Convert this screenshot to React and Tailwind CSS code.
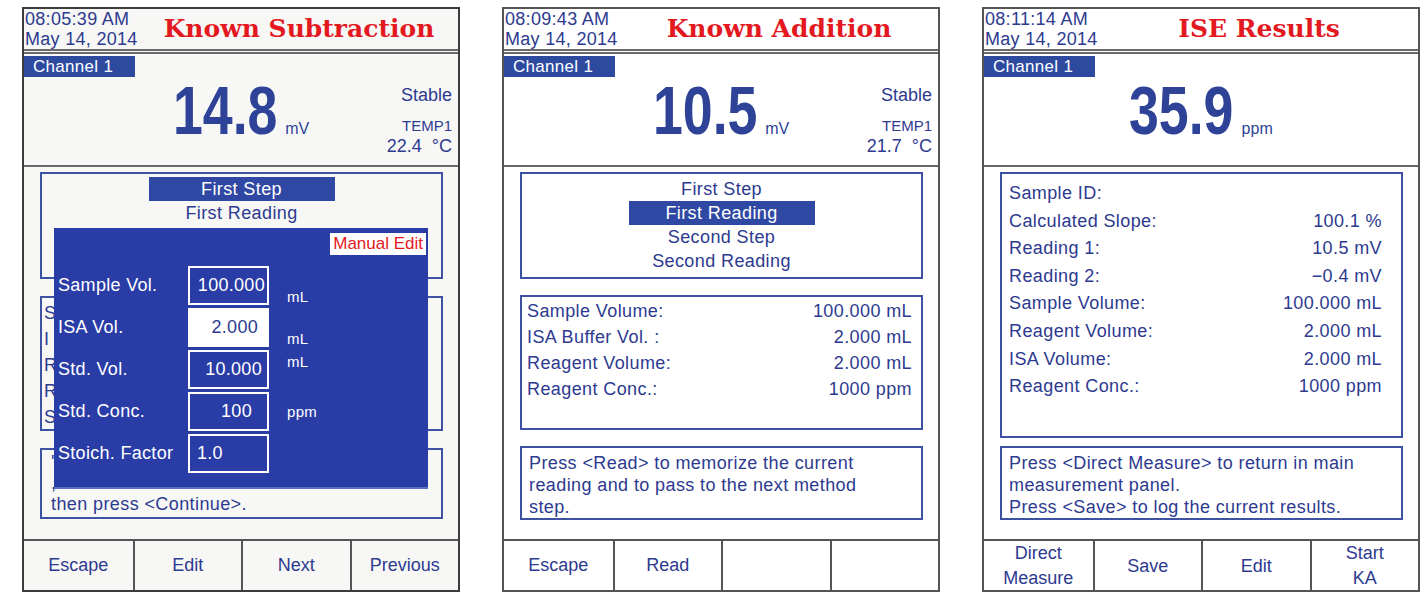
import React from "react";

const LCD = { fontFamily: '"Liberation Sans", Arial, sans-serif' };

function Panel({ time, date, title, value, unit, temp, buttons, children, overlay, dim }) {
  return (
    <div
      className={`relative w-[438px] h-[585px] border-2 flex flex-col text-[#2d3a8f] ${
        dim ? "border-[#3c3c3c] bg-[#f7f8f6]" : "border-[#555] bg-white"
      }`}
      style={LCD}
    >
      {/* header */}
      <div className="h-[40px] flex items-center">
        <div className="pl-[1px] text-[18px] leading-[20px] tracking-[0.3px] w-[118px] shrink-0 whitespace-nowrap">
          <div>{time}</div>
          <div>{date}</div>
        </div>
        <div
          className="flex-1 text-center text-[25px] font-bold text-[#e3191f] pr-[2px] whitespace-nowrap"
          style={{ fontFamily: '"DejaVu Serif", "Liberation Serif", serif' }}
        >
          {title}
        </div>
      </div>
      <div className="h-[5px] border-y-2 border-[#6a6a6a]" />

      {/* measurement */}
      <div className="h-[113px] border-b-2 border-[#6a6a6a] grid grid-cols-[1fr_auto_1fr]">
        <div>
          <div className="mt-[2px] w-[111px] h-[21px] bg-[#2d4a9f] text-white text-[17px] leading-[21px] pl-[9px] tracking-[0.3px]">
            Channel 1
          </div>
        </div>
        <div className="flex items-baseline pt-[23px]">
          <span className="inline-block scale-x-[0.79] -mx-[14px] text-[68px] leading-[67px] font-bold text-[#2e4398]">
            {value}
          </span>
          <span className="ml-[8px] text-[16px] text-[#2e4398]">{unit}</span>
        </div>
        <div className="text-right pr-[6px]">
          {temp && (
            <>
              <div className="mt-[31px] text-[18px] leading-[20px]">Stable</div>
              <div className="mt-[13px] text-[15px] leading-[16px]">TEMP1</div>
              <div className="mt-[2px] text-[18px] leading-[20px] whitespace-pre">{temp}</div>
            </>
          )}
        </div>
      </div>

      {/* content */}
      <div className="flex-1 pl-[16px] pr-[15px] flex flex-col text-[18px] tracking-[0.4px]">{children}</div>

      {/* buttons */}
      <div className="h-[51px] border-t-2 border-[#555] grid grid-cols-4 text-[18px]">
        {buttons.map((b, i) => (
          <div
            key={i}
            className={`flex flex-col items-center justify-center leading-[25px] ${
              i > 0 ? "border-l-2 border-[#555]" : ""
            }`}
          >
            {b.split("\n").map((l, j) => (
              <div key={j}>{l}</div>
            ))}
          </div>
        ))}
      </div>

      {overlay}
    </div>
  );
}

function Box({ className = "", children }) {
  return <div className={`border-2 border-[#3d52a3] ${className}`}>{children}</div>;
}

function Steps({ items, active }) {
  return (
    <Box className="mt-[5px] h-[107px] pt-[3px] flex flex-col items-center">
      {items.map((s, i) => (
        <div
          key={s}
          className={`h-[24px] leading-[24px] text-center ${
            i === active ? "w-[186px] bg-[#2f48a3] text-white" : ""
          }`}
        >
          {s}
        </div>
      ))}
    </Box>
  );
}

function Rows({ rows, rowH, className }) {
  return (
    <div className={className}>
      {rows.map(([k, v]) => (
        <div key={k} className={`flex justify-between ${rowH}`}>
          <span>{k}</span>
          <span>{v}</span>
        </div>
      ))}
    </div>
  );
}

function Dialog() {
  const fields = [
    ["Sample Vol.", "100.000", "mL", "mt-[24px]", "justify-end pr-[2px]", false],
    ["ISA Vol.", "2.000", "mL", "mt-[24px]", "justify-end pr-[9px]", true],
    ["Std. Vol.", "10.000", "mL", "-mt-[15px]", "justify-end pr-[5px]", false],
    ["Std. Conc.", "100", "ppm", "mt-[2px]", "justify-end pr-[15px]", false],
    ["Stoich. Factor", "1.0", "", "", "justify-start pl-[7px]", false],
  ];
  return (
    <div className="absolute left-[30px] top-[219px] w-[374px] h-[261px] bg-[#2a3ca6] border-b-2 border-[#5a6fc0] text-white">
      <div className="absolute top-[5px] right-[2px] h-[22px] leading-[22px] px-[3px] bg-white text-[#e3191f] text-[17px]">
        Manual Edit
      </div>
      <div className="pt-[38px] flex flex-col gap-[3px] text-[18px] tracking-[0.3px]">
        {fields.map(([label, val, u, off, align, hi]) => (
          <div key={label} className="h-[39px] flex items-center">
            <div className="w-[134px] pl-[4px] whitespace-nowrap">{label}</div>
            <div
              className={`w-[81px] h-[39px] border-2 border-white flex items-center ${align} ${
                hi ? "bg-white text-[#2d3a8f]" : ""
              }`}
            >
              {val}
            </div>
            <div className={`ml-[18px] text-[15px] ${off}`}>{u}</div>
          </div>
        ))}
      </div>
    </div>
  );
}

export default function App() {
  return (
    <div className="w-[1424px] h-[596px] bg-white pt-[7px] pl-[22px] flex gap-[42px] overflow-hidden">
      <Panel
        dim
        time="08:05:39 AM"
        date="May 14, 2014"
        title="Known Subtraction"
        value="14.8"
        unit="mV"
        temp="22.4  °C"
        buttons={["Escape", "Edit", "Next", "Previous"]}
        overlay={<Dialog />}
      >
        <Steps items={["First Step", "First Reading"]} active={0} />
        <Box className="mt-[17px] h-[135px] pl-[2px] pt-[2px]">
          {["S", "I", "R", "R", "S"].map((t, i) => (
            <div key={i} className="h-[26px] leading-[26px]">{t}</div>
          ))}
        </Box>
        <Box className="mt-[17px] h-[71px] pl-[9px] leading-[21px] pt-[2px]">
          <div>'</div>
          <div>,</div>
          <div>then press &lt;Continue&gt;.</div>
        </Box>
      </Panel>

      <Panel
        time="08:09:43 AM"
        date="May 14, 2014"
        title="Known Addition"
        value="10.5"
        unit="mV"
        temp="21.7  °C"
        buttons={["Escape", "Read", "", ""]}
      >
        <Steps items={["First Step", "First Reading", "Second Step", "Second Reading"]} active={1} />
        <Box className="mt-[16px] h-[135px] pl-[5px] pr-[9px] pt-[1px]">
          <Rows
            rowH="h-[26px] leading-[26px]"
            rows={[
              ["Sample Volume:", "100.000 mL"],
              ["ISA Buffer Vol. :", "2.000 mL"],
              ["Reagent Volume:", "2.000 mL"],
              ["Reagent Conc.:", "1000 ppm"],
            ]}
          />
        </Box>
        <Box className="mt-[16px] h-[74px] pl-[7px] pt-[4px] leading-[22px]">
          <div>Press &lt;Read&gt; to memorize the current</div>
          <div>reading and to pass to the next method</div>
          <div>step.</div>
        </Box>
      </Panel>

      <Panel
        time="08:11:14 AM"
        date="May 14, 2014"
        title="ISE Results"
        value="35.9"
        unit="ppm"
        buttons={["Direct\nMeasure", "Save", "Edit", "Start\nKA"]}
      >
        <Box className="mt-[5px] h-[266px] pl-[7px] pr-[19px] pt-[6px]">
          <Rows
            rowH="h-[27.6px] leading-[27.6px]"
            rows={[
              ["Sample ID:", ""],
              ["Calculated Slope:", "100.1 %"],
              ["Reading 1:", "10.5 mV"],
              ["Reading 2:", "\u22120.4 mV"],
              ["Sample Volume:", "100.000 mL"],
              ["Reagent Volume:", "2.000 mL"],
              ["ISA Volume:", "2.000 mL"],
              ["Reagent Conc.:", "1000 ppm"],
            ]}
          />
        </Box>
        <Box className="mt-[8px] h-[74px] pl-[7px] pt-[4px] leading-[22px]">
          <div>Press &lt;Direct Measure&gt; to return in main</div>
          <div>measurement panel.</div>
          <div>Press &lt;Save&gt; to log the current results.</div>
        </Box>
      </Panel>
    </div>
  );
}
